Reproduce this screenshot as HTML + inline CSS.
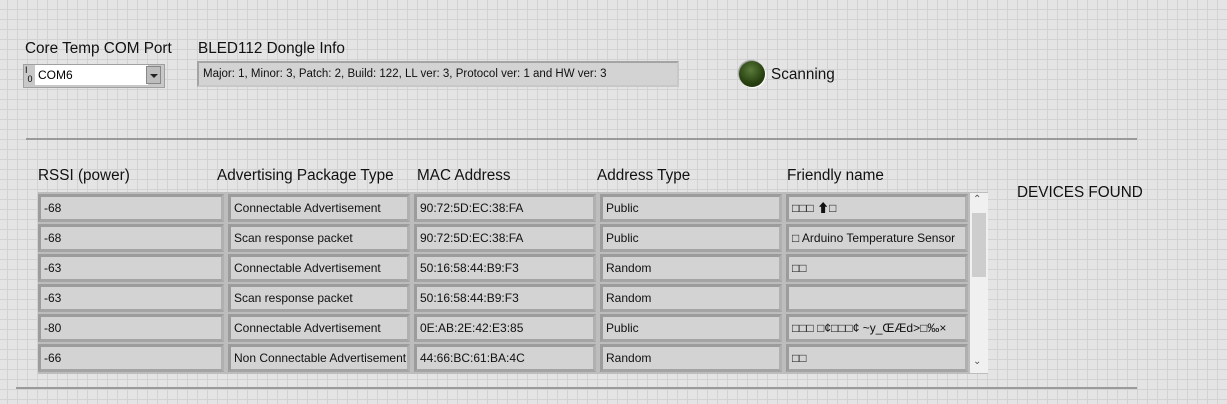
<!DOCTYPE html><html><head><style>
body{margin:0;width:1227px;height:404px;overflow:hidden;position:relative;font-family:"Liberation Sans","Noto Sans CJK SC",sans-serif;
background-color:#e4e4e4;
background-image:linear-gradient(to right,#d2d2d2 1px,transparent 1px),linear-gradient(to bottom,#d2d2d2 1px,transparent 1px);
background-size:10px 10px;background-position:7px 9px;}
.a{position:absolute;white-space:nowrap}
.lbl{font-size:15.3px;color:#111}
.c{position:absolute;height:28px;box-sizing:border-box;background:#d3d3d3;border:3px solid;border-color:#9c9c9c #b0b0b0 #a4a4a4 #9c9c9c;font-size:12px;color:#111;line-height:16px;padding:3px 0 0 3px;overflow:hidden}
</style></head><body>
<div class="a lbl" style="left:25px;top:40px">Core Temp COM Port</div>
<div class="a lbl" style="left:198px;top:40px">BLED112 Dongle Info</div>
<div class="a" style="left:23px;top:64px;width:140px;height:22px;background:#c8c8c8;border:1px solid #a0a0a0"></div>
<div class="a" style="left:25px;top:66px;font-size:9px;line-height:9px">I<br>&nbsp;0</div>
<div class="a" style="left:35px;top:65px;width:110px;height:20px;background:#fff;font-size:12px;line-height:20px;padding-left:3px">COM6</div>
<div class="a" style="left:146px;top:66px;width:15px;height:18px;background:#bdbdbd;border:1px solid #888;box-sizing:border-box"><div style="margin:7px auto 0;width:0;height:0;border-left:4px solid transparent;border-right:4px solid transparent;border-top:4px solid #222"></div></div>
<div class="a" style="left:197px;top:61px;width:474px;height:22px;background:#d3d3d3;border:2px solid;border-color:#a4a4a4 #c8c8c8 #c8c8c8 #a4a4a4;font-size:11.5px;line-height:22px;padding-left:4px;color:#111">Major: 1, Minor: 3, Patch: 2, Build: 122, LL ver: 3, Protocol ver: 1 and HW ver: 3</div>
<div class="a" style="left:739px;top:61px;width:26px;height:26px;border-radius:50%;background:radial-gradient(circle at 45% 35%,#5a7a3a,#27400f 60%,#1a2a0a);box-shadow:1px 1px 1px #fff,-1px -1px 1px #999"></div>
<div class="a lbl" style="left:771px;top:66px">Scanning</div>
<div class="a" style="left:26px;top:138px;width:1111px;height:2px;background:#9a9a9a"></div>
<div class="a" style="left:16px;top:387px;width:1121px;height:2px;background:#9a9a9a"></div>
<div class="a lbl" style="left:38px;top:167px">RSSI (power)</div>
<div class="a lbl" style="left:217px;top:167px">Advertising Package Type</div>
<div class="a lbl" style="left:417px;top:167px">MAC Address</div>
<div class="a lbl" style="left:597px;top:167px">Address Type</div>
<div class="a lbl" style="left:787px;top:167px">Friendly name</div>
<div class="a lbl" style="left:1017px;top:184px">DEVICES FOUND</div>
<div class="a" style="left:38px;top:192px;width:950px;height:182px;background:#bdbdbd"></div>
<div id="t"></div>
<div class="a" style="left:970px;top:193px;width:18px;height:180px;background:#f0f0f0"></div>
<div class="a" style="left:972px;top:213px;width:14px;height:64px;background:#cdcdcd"></div>
<div class="a" style="left:973px;top:194px;font-size:10px;color:#555">&#8963;</div>
<div class="a" style="left:973px;top:356px;font-size:10px;color:#555">&#8964;</div>
<script>
var rows=[["-68","Connectable Advertisement","90:72:5D:EC:38:FA","Public","&#9633;&#9633;&#9633; &#11014;&#9633;"],
["-68","Scan response packet","90:72:5D:EC:38:FA","Public","&#9633; Arduino Temperature Sensor"],
["-63","Connectable Advertisement","50:16:58:44:B9:F3","Random","&#9633;&#9633;"],
["-63","Scan response packet","50:16:58:44:B9:F3","Random",""],
["-80","Connectable Advertisement","0E:AB:2E:42:E3:85","Public","&#9633;&#9633;&#9633; &#9633;¢&#9633;&#9633;&#9633;¢ ~y_ŒÆd&gt;&#9633;‰×"],
["-66","Non Connectable Advertisement","44:66:BC:61:BA:4C","Random","&#9633;&#9633;"]];
var xs=[38,228,414,600,786],ws=[186,182,182,182,182],h="";
rows.forEach(function(r,i){r.forEach(function(v,j){h+='<div class="c" style="left:'+xs[j]+'px;top:'+(194+i*30)+'px;width:'+ws[j]+'px">'+v+'</div>';});});
document.getElementById("t").outerHTML=h;
</script>
</body></html>
